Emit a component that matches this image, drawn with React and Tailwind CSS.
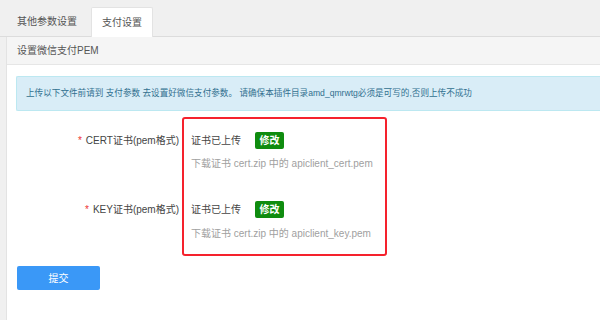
export default function App() {
  return (
    <div className="h-[320px] w-[600px] overflow-hidden bg-[#f0f0f0] font-['Liberation_Sans','Noto_Sans_CJK_SC',sans-serif] text-[10px] text-[#444]">
      <div className="flex h-[37px] items-end border-b border-[#dcdcdc] pl-[6px]">
        <div className="flex h-[29px] items-center px-[11px] text-[#555]">其他参数设置</div>
        <div className="relative -mb-px ml-[3px] flex h-[30px] items-center rounded-t-[2px] border border-b-0 border-[#e3e3e3] bg-white px-[10px] text-[#555]">
          支付设置
        </div>
      </div>

      <div className="ml-[6px] h-full border-l border-[#e3e3e3] bg-white">
        <div className="flex h-[28px] items-center border-b border-[#e6e6e6] bg-[#f5f5f5] px-[10px] text-[#555]">
          设置微信支付PEM
        </div>

        <div className="pl-[9px] pt-[11px]">
          <div className="flex h-[35px] items-center rounded-l-[2px] border border-r-0 border-[#bce8f1] bg-[#d9edf7] px-[9px] whitespace-nowrap text-[8.6px] text-[#31708f]">
            上传以下文件前请到 支付参数 去设置好微信支付参数。 请确保本插件目录amd_qmrwtg必须是可写的,否则上传不成功
          </div>

          <div className="mt-[6px] flex">
            <div className="flex w-[164px] flex-col items-end pt-[15px] pr-[1px]">
              <div className="flex h-[17px] items-center">
                <span className="mr-[4px] text-[#e33]">*</span>CERT证书(pem格式)
              </div>
              <div className="mt-[52px] flex h-[17px] items-center">
                <span className="mr-[4px] text-[#e33]">*</span>KEY证书(pem格式)
              </div>
            </div>

            <div className="ml-[2px] w-[205px] rounded-[3px] border-2 border-[#f5222d] pl-[7px] pt-[13px] pb-[14px]">
              <div className="flex h-[17px] items-center">
                <span>证书已上传</span>
                <button className="ml-[14px] flex h-[17px] w-[29px] items-center justify-center rounded-[2px] bg-[#0f8c0f] font-bold text-white">
                  修改
                </button>
              </div>
              <div className="mt-[7px] flex h-[14px] items-center text-[#a0a0a0]">
                下载证书 cert.zip 中的 apiclient_cert.pem
              </div>
              <div className="mt-[31px] flex h-[17px] items-center">
                <span>证书已上传</span>
                <button className="ml-[14px] flex h-[17px] w-[29px] items-center justify-center rounded-[2px] bg-[#0f8c0f] font-bold text-white">
                  修改
                </button>
              </div>
              <div className="mt-[8px] flex h-[14px] items-center text-[#a0a0a0]">
                下载证书 cert.zip 中的 apiclient_key.pem
              </div>
            </div>
          </div>

          <button className="ml-px mt-[10px] flex h-[24px] w-[83px] items-center justify-center rounded-[2px] bg-[#3a98f7] text-white">
            提交
          </button>
        </div>
      </div>
    </div>
  );
}
